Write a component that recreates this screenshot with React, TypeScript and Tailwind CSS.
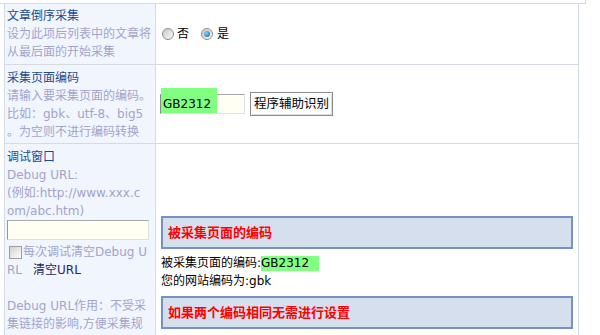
export default function App() {
  const title = "text-[#1a4b8c]"
  const desc = "text-[#a3a3cc]"

  return (
    <div className="w-[600px] h-[335px] overflow-hidden bg-white text-[12px] leading-[18px] text-black font-['DejaVu_Sans','Noto_Sans_CJK_SC',sans-serif]">
      {/* end of the block above */}
      <div className="h-[4px] w-[586px] border-b border-r border-[#d3d8e0]" />

      <div className="ml-[4px] w-[575px] border-l border-r border-[#d4dae2]">
        {/* 文章倒序采集 */}
        <div className="grid grid-cols-[151px_1fr] h-[61px] border-b border-[#d6dae2]">
          <div className="bg-[#f1f6fe] border-r border-[#d3dbe6] pl-[2px] flex flex-col justify-center whitespace-nowrap">
            <div className={title}>文章倒序采集</div>
            <div className={desc}>设为此项后列表中的文章将</div>
            <div className={desc}>从最后面的开始采集</div>
          </div>
          <div className="flex items-center pl-[6px]">
            <span className="w-[12px] h-[12px] rounded-full border border-[#8e8e8e] bg-[linear-gradient(135deg,#c8c8c8,#f8f8f8)]" />
            <span className="ml-[3px]">否</span>
            <span className="relative ml-[12px] w-[12px] h-[12px] rounded-full border border-[#8e8e8e] bg-[linear-gradient(135deg,#c8c8c8,#f8f8f8)]">
              <span className="absolute left-[2px] top-[2px] w-[6px] h-[6px] rounded-full bg-[radial-gradient(circle_at_35%_35%,#86d6ff,#0b5d9c)]" />
            </span>
            <span className="ml-[4px]">是</span>
          </div>
        </div>

        {/* 采集页面编码 */}
        <div className="grid grid-cols-[151px_1fr] h-[79px] border-b border-[#d6dae2]">
          <div className="bg-[#f1f6fe] border-r border-[#d3dbe6] pl-[2px] pt-[1px] flex flex-col justify-center whitespace-nowrap">
            <div className={title}>采集页面编码</div>
            <div className={desc}>请输入要采集页面的编码。</div>
            <div className={desc}>比如：gbk、utf-8、big5</div>
            <div className={desc}>。为空则不进行编码转换</div>
          </div>
          <div className="flex items-center pl-[4px]">
            <div className="relative w-[85px] h-[20px] bg-[#fffff4] border border-t-[#a8a8a8] border-l-[#8a8a8a] border-r-[#e2e2e2] border-b-[#e2e2e2] flex items-center pl-[2px]">
              <span className="absolute left-0 top-[-7px] w-[56px] h-[25px] bg-[#80ff80]" />
              <span className="relative">GB2312</span>
            </div>
            <div className="ml-[5px] w-[83px] h-[24px] border border-[#8c8c8c] bg-[#fcfcfc] shadow-[inset_1px_1px_0_#ffffff,inset_-1px_-1px_0_#dcdcdc] flex items-center justify-center text-[12.5px]">
              程序辅助识别
            </div>
          </div>
        </div>

        {/* 调试窗口 */}
        <div className="grid grid-cols-[151px_1fr] h-[200px]">
          <div className="bg-[#f1f6fe] border-r border-[#d3dbe6] pl-[2px] pt-[4px] whitespace-nowrap overflow-hidden">
            <div className={title}>调试窗口</div>
            <div className={desc}>Debug URL:</div>
            <div className={desc}>(例如:http://www.xxx.c</div>
            <div className={desc}>om/abc.htm)</div>
            <div className="w-[142px] h-[20px] bg-[#fffff2] border border-t-[#a8a8a8] border-l-[#999999] border-r-[#e0e0e0] border-b-[#e0e0e0]" />
            <div className={`mt-[3px] flex items-center ${desc}`}>
              <span className="ml-[2px] w-[13px] h-[13px] border border-[#9c9c9c] bg-[linear-gradient(135deg,#d2d2d2,#ffffff)]" />
              <span className="ml-[1px]">每次调试清空Debug U</span>
            </div>
            <div className="flex">
              <span className={desc}>RL</span>
              <span className="ml-[11px] text-[#25256b]">清空URL</span>
            </div>
            <div className="h-[18px]" />
            <div className={desc}>Debug URL作用：不受采</div>
            <div className={desc}>集链接的影响,方便采集规</div>
          </div>
          <div className="px-[5px] pt-[72px]">
            <div className="h-[33px] border-2 border-[#7692c4] bg-[#d6dfee] flex items-center pl-[5px] text-[13px] font-bold text-[#ff0000]">
              被采集页面的编码
            </div>
            <div className="mt-[5px]">
              被采集页面的编码:<span className="inline-block bg-[#80ff80] pr-[10px] leading-[15px]">GB2312</span>
            </div>
            <div>您的网站编码为:gbk</div>
            <div className="mt-[6px] h-[33px] border-2 border-[#7692c4] bg-[#d6dfee] flex items-center pl-[5px] text-[13px] font-bold text-[#ff0000]">
              如果两个编码相同无需进行设置
            </div>
          </div>
        </div>
      </div>
    </div>
  )
}
